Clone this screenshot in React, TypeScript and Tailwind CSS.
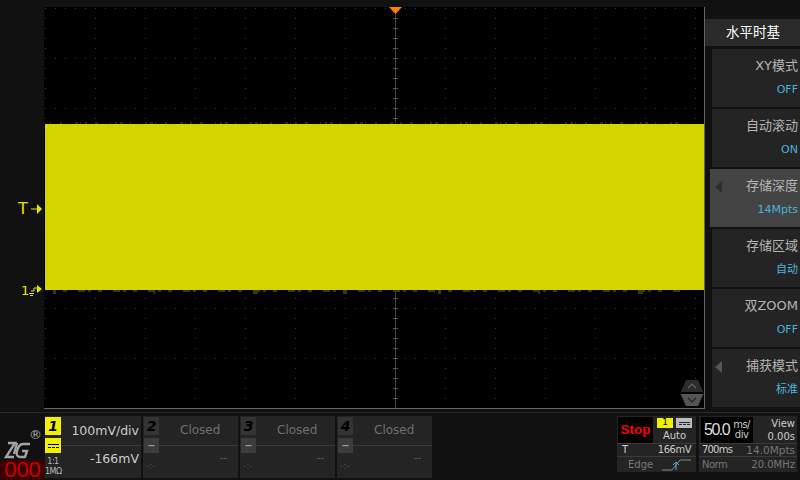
import React from "react";

const cjk = "font-['DejaVu_Sans','Noto_Sans_CJK_SC',sans-serif]";

const menuItems = [
  { label: "XY模式", value: "OFF" },
  { label: "自动滚动", value: "ON" },
  { label: "存储深度", value: "14Mpts", active: true, arrow: true },
  { label: "存储区域", value: "自动" },
  { label: "双ZOOM", value: "OFF" },
  { label: "捕获模式", value: "标准", arrow: true },
];

function Screen() {
  const xs = Array.from({ length: 14 }, (_, i) => 45 + i * 50);
  const ys = Array.from({ length: 8 }, (_, i) => 8 + i * 50);
  const dots: React.ReactNode[] = [];
  // minor dots along each division line
  xs.forEach((x) => {
    for (let y = 8; y < 408; y += 10) {
      dots.push(<rect key={`v${x}-${y}`} x={x} y={y} width="1" height="1" fill="#3a3a3a" />);
    }
  });
  ys.forEach((y) => {
    for (let x = 45; x < 704; x += 10) {
      dots.push(<rect key={`h${x}-${y}`} x={x} y={y} width="1" height="1" fill="#3a3a3a" />);
    }
  });
  const ticks = Array.from({ length: 40 }, (_, i) => 8 + i * 10);
  // noise along the trace edges comes in little clusters
  const notches = Array.from({ length: 90 }, (_, i) => 50 + i * 7 + ((i * 13) % 5)).filter((_, i) => i % 5 !== 2);

  return (
    <svg width="660" height="401" viewBox="44 7 660 401" className="block">
      <rect x="44" y="7" width="660" height="401" fill="#000" />
      {dots}
      <rect x="395" y="8" width="1" height="400" fill="#444" />
      {ticks.map((y) => (
        <rect key={y} x="393" y={y} width="5" height="1" fill="#555" />
      ))}
      <rect x="45" y="124" width="659" height="166" fill="#d4d400" />
      {notches.map((x, i) => (
        <g key={x}>
          <rect x={x} y="122" width={1 + (i % 3)} height="2" fill="#2c2c00" />
          <rect x={x + 3} y="290" width={2 + ((i + 1) % 4)} height={i % 11 === 0 ? 4 : 2} fill="#3a3a00" />
        </g>
      ))}
      <polygon points="389,7 402,7 395.5,14" fill="#ff8000" />
    </svg>
  );
}

function MenuItem({ item }: { item: (typeof menuItems)[number] }) {
  return (
    <div
      className={`relative flex h-[58px] flex-col items-end pr-[2px] ${
        item.active ? "ml-[5px] bg-[#444444]" : "ml-[7px] bg-[#242424]"
      }`}
    >
      {item.arrow && (
        <svg width="8" height="12" viewBox="0 0 8 12" className={`absolute top-[12px] ${item.active ? "left-[5px]" : "left-[3px]"}`}>
          <polygon points="7,0 7,12 0,6" fill={item.active ? "#2e2e2e" : "#555"} />
        </svg>
      )}
      <span className="mt-[8px] text-[13px] leading-[18px] text-[#b4b4b4]">{item.label}</span>
      <span className="mt-[7px] text-[11px] leading-[16px] text-[#46b4dc]">{item.value}</span>
    </div>
  );
}

function ClosedChannel({ n }: { n: string }) {
  return (
    <div className="relative flex h-[62px] w-[95px] flex-col bg-[#242424]">
      <div className="flex h-[30px] border-b border-[#3a3a3a]">
        <div className="ml-[1px] mt-[1px] flex h-[18px] w-[15px] items-center justify-center bg-[#333333] text-[14px] font-bold italic text-black">
          {n}
        </div>
        <span className="ml-[21px] mt-[4px] text-[12px] leading-[20px] text-[#6f6f6f]">Closed</span>
      </div>
      <div className="absolute left-[1px] top-[22px] flex h-[15px] w-[15px] items-center justify-center bg-[#3c3c3c] text-[10px] font-bold text-[#999]">
        −
      </div>
      <span className="absolute right-[11px] top-[35px] text-[10px] leading-[14px] text-[#5a5a5a]">--</span>
      <span className="absolute left-[3px] top-[43px] text-[9px] leading-[14px] text-[#4a4a4a]">-:-</span>
    </div>
  );
}

export default function App() {
  return (
    <div className={`flex h-[480px] w-[800px] flex-col overflow-hidden bg-[#111111] ${cjk}`}>
      <div className="flex h-[409px]">
        {/* channel markers */}
        <div className="relative w-[44px] shrink-0">
          <span className="absolute left-[18px] top-[200px] text-[16px] leading-[18px] text-[#e6e600]">T</span>
          <svg width="12" height="10" viewBox="0 0 12 10" className="absolute left-[31px] top-[204px]">
            <path d="M0 5h7" stroke="#e6e600" strokeWidth="1" />
            <polygon points="6,0 11,5 6,10" fill="#e6e600" />
          </svg>
          <span className="absolute left-[21px] top-[283px] text-[13px] leading-[16px] text-[#e6e600]">1</span>
          <svg width="14" height="12" viewBox="0 0 14 12" className="absolute left-[29px] top-[285px]">
            <path d="M2 6h3V3h4M0 8.5h5M1 10.5h3" stroke="#e6e600" strokeWidth="1" fill="none" />
            <polygon points="8,0 13,4 8,8" fill="#e6e600" />
          </svg>
        </div>

        {/* waveform screen */}
        <div className="relative mt-[7px] h-[402px] w-[661px] shrink-0 border border-[#666]">
          <div className="-mt-[1px] -ml-[1px]">
            <Screen />
          </div>
          <svg width="24" height="26" viewBox="0 0 24 26" className="absolute left-[635px] top-[372px]">
            <path d="M6 0h12l5 11v1H1v-1z" fill="#2c2c2c" />
            <path d="M1 14h22v1l-5 11H6l-5-11z" fill="#555" />
            <path d="M8 8l4-4 4 4" stroke="#666" strokeWidth="1.2" fill="none" />
            <path d="M8 18l4 4 4-4" stroke="#222" strokeWidth="1.2" fill="none" />
          </svg>
        </div>

        {/* side menu */}
        <div className="flex w-[95px] shrink-0 flex-col pt-[19px]">
          <div className="flex h-[27px] items-center bg-[#2a2a2a] pl-[21px] text-[13.5px] text-white">水平时基</div>
          <div className="mt-[3px] flex flex-col gap-[2px]">
            {menuItems.map((item) => (
              <MenuItem key={item.label} item={item} />
            ))}
          </div>
        </div>
      </div>

      {/* bottom status bar */}
      <div className="mt-[3px] flex h-[68px] border-t border-[#2a2a2a] pt-[3px]">
        <div className="relative w-[45px] shrink-0">
          <span className="absolute left-[29px] top-[12px] text-[13px] leading-[14px] text-[#aaa]">®</span>
          <svg width="28" height="20" viewBox="0 0 28 20" className="absolute left-[4px] top-[24px]">
            <g stroke="#a4a4a4" strokeWidth="2.4" fill="none">
              <path d="M4 3h7L2 17h8" />
              <path d="M13 3l-3 11" />
              <path d="M26 4h-7c-3 0-5 3-6 7-1 3 0 6 3 6h5l2-6h-5" />
            </g>
          </svg>
          <div className="absolute bottom-0 left-0 flex h-[20px] w-[45px] items-center justify-center bg-[#3a0000] font-['Liberation_Sans',sans-serif] text-[22px] leading-[20px] text-[#cc0000]">
            000
          </div>
        </div>

        <div className="relative h-[62px] w-[96px] bg-[#242424]">
          <div className="absolute left-0 top-[1px] flex h-[18px] w-[16px] items-center justify-center bg-[#f0f000] text-[14px] font-bold italic text-black">1</div>
          <div className="absolute left-0 top-[22px] flex h-[15px] w-[16px] flex-col items-center justify-center gap-[2px] bg-[#f0f000]">
            <div className="h-[1px] w-[11px] bg-black" />
            <div className="h-[1px] w-[11px] border-t border-dashed border-black" />
          </div>
          <div className="absolute left-0 top-[41px] w-[16px] text-center text-[8px] leading-[10px] tracking-[-0.5px] text-[#bbb]">1:1<br />1MΩ</div>
          <div className="ml-[17px] h-[30px] border-b border-[#3a3a3a] pr-[2px] pt-[5px] text-right text-[12.5px] leading-[20px] text-[#cccccc]">100mV/div</div>
          <div className="pr-[2px] pt-[3px] text-right text-[12.5px] leading-[20px] text-[#cccccc]">-166mV</div>
        </div>
        <div className="ml-[2px] flex gap-[2px]">
          <ClosedChannel n="2" />
          <ClosedChannel n="3" />
          <ClosedChannel n="4" />
        </div>

        <div className="flex-1" />

        {/* trigger panel */}
        <div className="flex h-[56px] w-[79px] flex-col bg-[#242424]">
          <div className="flex h-[29px] border-b border-[#3a3a3a]">
            <div className="ml-[1px] mt-[1px] flex h-[26px] w-[35px] items-center justify-center bg-black font-['Liberation_Sans',sans-serif] text-[13.5px] font-bold text-[#ff0000]">Stop</div>
            <div className="ml-[4px] flex flex-col items-center">
              <div className="mt-[2px] flex gap-[3px]">
                <div className="flex h-[10px] w-[16px] items-center justify-center bg-[#f0f000] text-[9px] text-black">1</div>
                <div className="flex h-[10px] w-[16px] flex-col items-center justify-center gap-[1px] bg-[#bbbbbb]">
                  <div className="h-[1px] w-[11px] bg-[#222]" />
                  <div className="h-[1px] w-[11px] border-t border-dashed border-[#222]" />
                </div>
              </div>
              <span className="mt-[1px] text-[10px] leading-[14px] text-[#ccc]">Auto</span>
            </div>
          </div>
          <div className="flex h-[13px] items-center justify-between border-b border-[#3a3a3a] pl-[5px] pr-[5px] text-[10px] leading-[12px] text-[#ccc]">
            <span>T</span>
            <span className="tracking-[-0.5px]">166mV</span>
          </div>
          <div className="flex flex-1 items-center pl-[11px] text-[10px] text-[#777]">
            <span>Edge</span>
            <svg width="29" height="12" viewBox="0 0 29 12" className="ml-[9px]">
              <path d="M0 11h10l8-10h11" stroke="#888" strokeWidth="1" fill="none" />
              <path d="M11 6l3-3 3 3M14 3v8" stroke="#46b4dc" strokeWidth="1" fill="none" />
            </svg>
          </div>
        </div>

        {/* timebase panel */}
        <div className="ml-[3px] mr-[3px] flex h-[56px] w-[98px] flex-col bg-[#242424]">
          <div className="flex h-[29px] border-b border-[#3a3a3a]">
            <div className="ml-[2px] mt-[1px] flex h-[26px] w-[52px] items-center bg-black pl-[3px]">
              <span className="font-['Liberation_Sans',sans-serif] text-[16px] leading-[26px] tracking-[-1.5px] text-[#dddddd]">50.0</span>
              <div className="ml-[4px] flex flex-col items-center text-[10px] leading-[10px] tracking-[-0.5px] text-[#ccc]">
                <span>ms/</span>
                <span>div</span>
              </div>
            </div>
            <div className="ml-auto pr-[2px] pt-[1px] text-right text-[10px] leading-[13px] text-[#ccc]">
              View<br />0.00s
            </div>
          </div>
          <div className="flex h-[13px] items-center justify-between border-b border-[#3a3a3a] pl-[3px] pr-[2px] text-[10px] leading-[12px] text-[#777]">
            <span className="tracking-[-0.8px] text-[#ccc]">700ms</span>
            <span className="text-[10.5px]">14.0Mpts</span>
          </div>
          <div className="flex flex-1 items-center justify-between pl-[3px] pr-[2px] text-[10px] text-[#777]">
            <span className="tracking-[-0.5px]">Norm</span>
            <span>20.0MHz</span>
          </div>
        </div>
      </div>
    </div>
  );
}
